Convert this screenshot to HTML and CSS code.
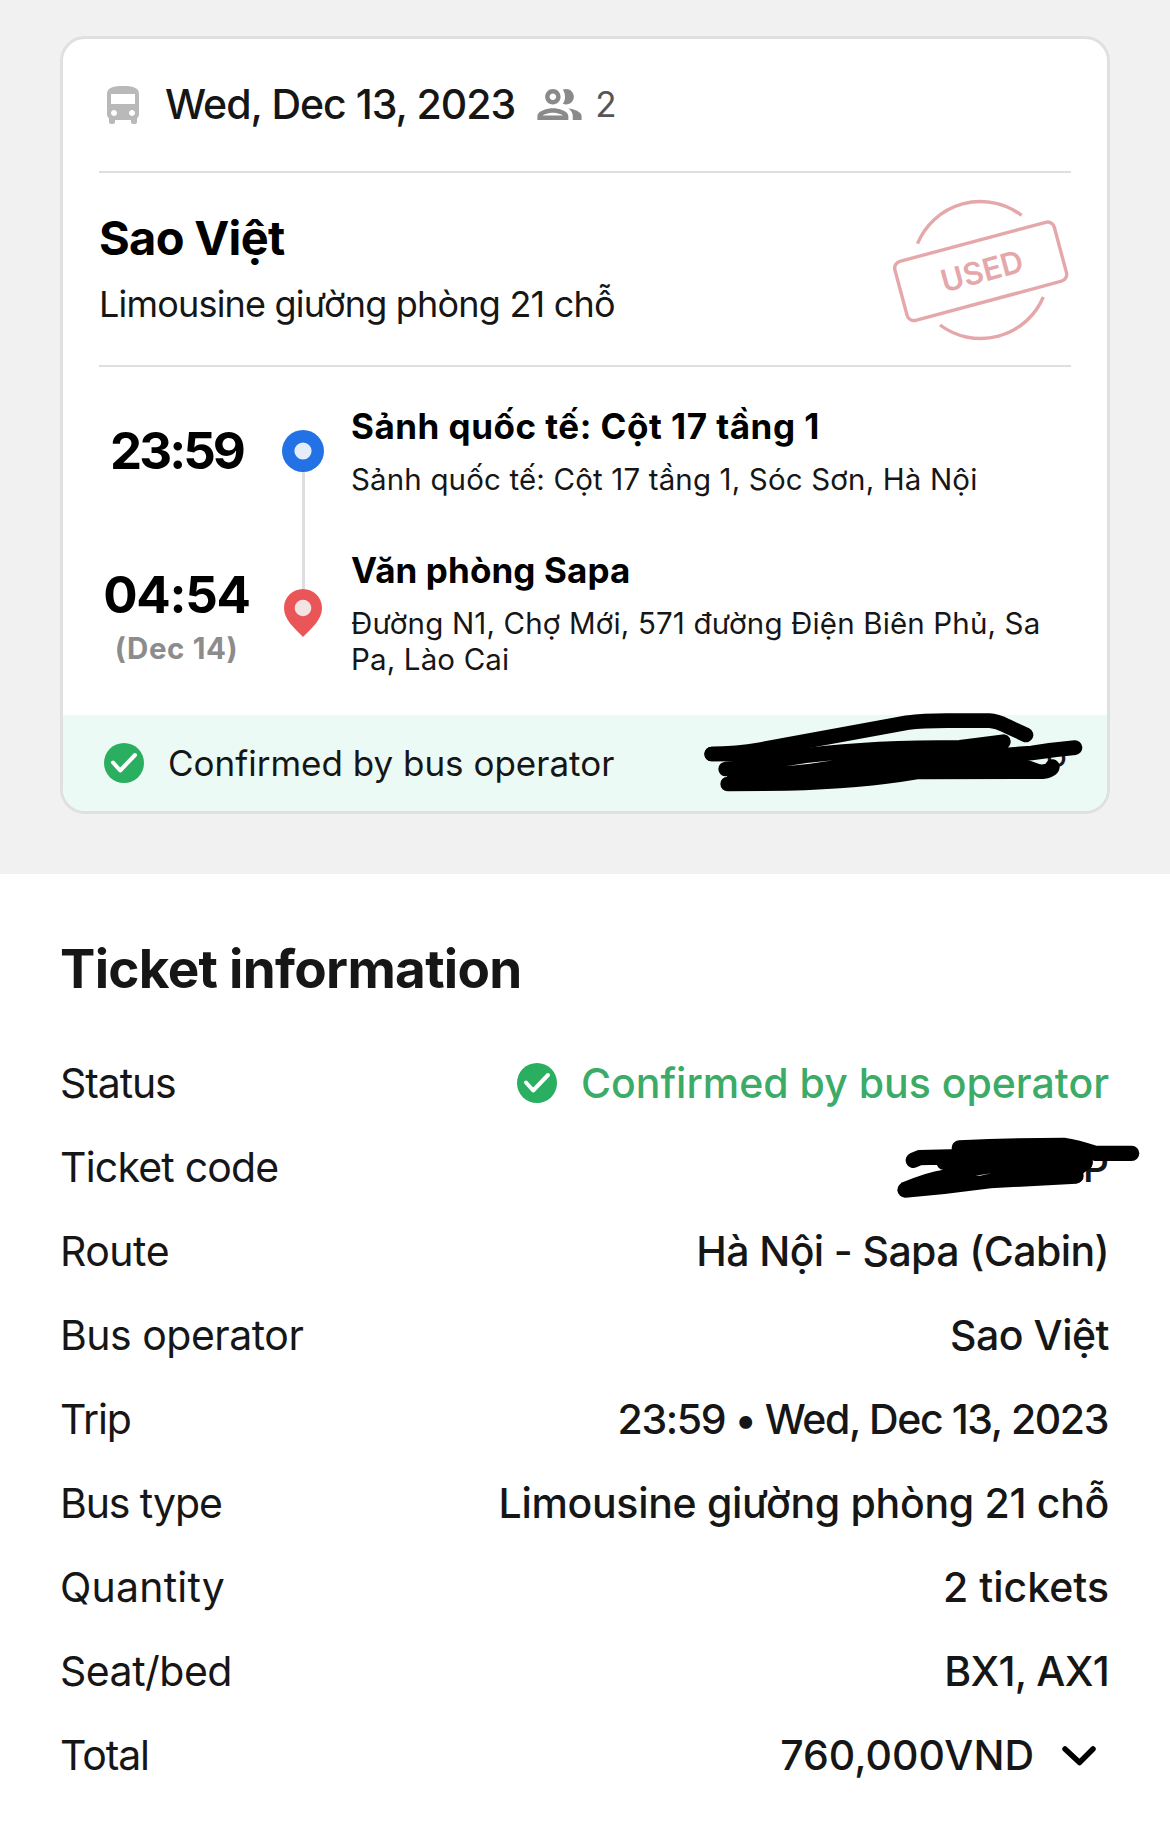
FILE: index.html
```html
<!DOCTYPE html>
<html lang="en">
<head>
<meta charset="UTF-8">
<meta name="viewport" content="width=device-width, initial-scale=1.0">
<title>Ticket information</title>
<link rel="stylesheet" href="styles.css">
</head>
<body>
<div class="top">
  <div class="card">
    <div class="card-header">
      <svg class="bus-icon" viewBox="0 0 24 24"><path d="M4 16c0 .88.39 1.67 1 2.22V20c0 .55.45 1 1 1h1c.55 0 1-.45 1-1v-1h8v1c0 .55.45 1 1 1h1c.55 0 1-.45 1-1v-1.78c.61-.55 1-1.34 1-2.22V6c0-3.5-3.58-4-8-4s-8 .5-8 4v10zm3.5 1c-.83 0-1.5-.67-1.5-1.5S6.67 14 7.5 14s1.5.67 1.5 1.5S8.33 17 7.5 17zm9 0c-.83 0-1.5-.67-1.5-1.5s.67-1.5 1.5-1.5 1.5.67 1.5 1.5-.67 1.5-1.5 1.5zM18 11H6V6h12v5z"/></svg>
      <span class="date">Wed, Dec 13, 2023</span>
      <svg class="people-icon" viewBox="0 0 24 24"><path d="M9 13.75c-2.34 0-7 1.17-7 3.5V19h14v-1.75c0-2.33-4.66-3.5-7-3.5zM4.34 17c.84-.58 2.87-1.25 4.66-1.25s3.82.67 4.66 1.25H4.34zM9 12c1.93 0 3.5-1.57 3.5-3.5S10.93 5 9 5 5.5 6.57 5.5 8.5 7.07 12 9 12zm0-5c.83 0 1.5.67 1.5 1.5S9.83 10 9 10s-1.5-.67-1.5-1.5S8.17 7 9 7zm7.04 6.81c1.16.84 1.96 1.96 1.96 3.44V19h4v-1.75c0-2.02-3.5-3.17-5.96-3.44zM15 12c1.93 0 3.5-1.57 3.5-3.5S16.93 5 15 5c-.54 0-1.04.13-1.5.35.63.89 1 1.98 1 3.15s-.37 2.26-1 3.15c.46.22.96.35 1.5.35z"/></svg>
      <span class="people">2</span>
    </div>

    <div class="operator">
      <div>
        <div class="operator-name">Sao Việt</div>
        <div class="operator-type">Limousine giường phòng 21 chỗ</div>
      </div>
      <svg class="stamp" viewBox="0 0 181 145">
        <path d="M27.5 45.7A68 68 0 0 1 131.6 17.4M50 127A68 68 0 0 0 153.3 99"/>
        <g transform="rotate(-15 90.7 73.3)">
          <rect x="8.2" y="42.8" width="165" height="61" rx="7"/>
          <text x="92" y="84.5" text-anchor="middle">USED</text>
        </g>
      </svg>
    </div>

    <div class="journey">
      <div class="stop">
        <div class="when"><div class="time time-from">23:59</div></div>
        <div class="marker">
          <svg class="dot" viewBox="0 0 42 42"><circle cx="21" cy="21" r="21" fill="#2272e6"/><circle cx="21" cy="21" r="8.6" fill="#e4edf9"/></svg>
          <div class="line"></div>
        </div>
        <div>
          <div class="stop-name stop-from">Sảnh quốc tế: Cột 17 tầng 1</div>
          <div class="address">Sảnh quốc tế: Cột 17 tầng 1, Sóc Sơn, Hà Nội</div>
        </div>
      </div>
      <div class="stop stop-last">
        <div class="when">
          <div class="time">04:54</div>
          <div class="day">(Dec 14)</div>
        </div>
        <div class="marker">
          <div class="line"></div>
          <svg class="pin" viewBox="0 0 38 48"><path d="M19 0C8.4 0 0 8.3 0 19c0 11 9 19 19 29 10-10 19-18 19-29C38 8.3 29.6 0 19 0z" fill="#ea5658"/><circle cx="19" cy="19" r="8.3" fill="#f3e4e4"/></svg>
        </div>
        <div>
          <div class="stop-name">Văn phòng Sapa</div>
          <div class="address">Đường N1, Chợ Mới, 571 đường Điện Biên Phủ, Sa Pa, Lào Cai</div>
        </div>
      </div>
    </div>

    <div class="card-footer">
      <svg class="check" viewBox="0 0 40 40"><circle cx="20" cy="20" r="20"/><path d="M9 19.5l7.2 8L31 12"/></svg>
      <span>Confirmed by bus operator</span>
      <span class="card-code">P</span>
      <svg class="redact" viewBox="0 0 1410 570">
        <path d="M155 192Q230 191 300 179Q560 132 740 98Q790 92 860 92L988 92Q1010 93 1040 108L1098 135"/>
        <path d="M155 192L450 194Q640 172 900 172L1030 155M197 237L500 225L900 205L1115 189Q1180 179 1245 173M203 282L380 280Q600 275 770 246L1150 245Q1176 240 1177 230"/>
        <path class="area" d="M200 240L240 195L500 180L1030 150L1040 190L1110 212L1160 230L770 250L400 285L203 285z"/>
        <path class="gap" d="M378 229L440 219L520 211L450 221z"/>
      </svg>
    </div>
  </div>
</div>

<div class="info">
  <h2>Ticket information</h2>
  <div class="row">
    <span class="label label-tight">Status</span>
    <span class="value confirmed">
      <svg class="check" viewBox="0 0 40 40"><circle cx="20" cy="20" r="20"/><path d="M9 19.5l7.2 8L31 12"/></svg>
      Confirmed by bus operator
    </span>
  </div>
  <div class="row">
    <span class="label label-code">Ticket code</span>
    <span class="value">P</span>
    <svg class="redact redact-code" viewBox="0 0 870 540">
      <path d="M100 151L118 143L240 140M238 114Q400 106 550 106Q590 112 645 130L755 130M192 157L616 157M75 240Q200 230 330 212L588 198"/>
      <path class="area" d="M62 219Q140 186 190 179L230 110L560 100L636 125L636 170L610 190L588 200L330 215L75 240z"/>
      <path class="gap" d="M286 197L335 190L300 197z"/>
    </svg>
  </div>
  <div class="row">
    <span class="label">Route</span>
    <span class="value route">Hà Nội - Sapa (Cabin)</span>
  </div>
  <div class="row">
    <span class="label">Bus operator</span>
    <span class="value bus-operator">Sao Việt</span>
  </div>
  <div class="row">
    <span class="label label-tight">Trip</span>
    <span class="value trip">23:59 • Wed, Dec 13, 2023</span>
  </div>
  <div class="row">
    <span class="label label-tight">Bus type</span>
    <span class="value bus-type">Limousine giường phòng 21 chỗ</span>
  </div>
  <div class="row">
    <span class="label label-quantity">Quantity</span>
    <span class="value">2 tickets</span>
  </div>
  <div class="row">
    <span class="label">Seat/bed</span>
    <span class="value seat">BX1, AX1</span>
  </div>
  <div class="row">
    <span class="label label-tight">Total</span>
    <span class="value total">
      760,000VND
      <svg class="chevron" viewBox="0 0 34 20"><path d="M3 3l14.5 13.5L31 3"/></svg>
    </span>
  </div>
</div>
</body>
</html>
```
FILE: styles.css
```css
* {
  box-sizing: border-box;
}

body {
  font-family: Inter, "Open Sans", sans-serif;
  background-color: #fff;
  color: #161616;
  margin: 0;
}

svg {
  flex: none;
}

.top {
  background-color: #f1f1f1;
  padding: 36px 60px 60px;
}

.card {
  background-color: #fff;
  border: 3px solid #dfe0df;
  border-radius: 25px;
  overflow: hidden;
}

.card-header {
  display: flex;
  align-items: center;
  height: 134px;
  margin: 0 36px;
  padding-bottom: 2px;
  border-bottom: 2px solid #dfdfdf;
}

.bus-icon {
  width: 48px;
  height: 48px;
  margin: 3px 18px 0 0;
  fill: #b9b9b9;
}

.date {
  font-size: 41px;
  font-weight: 500;
  letter-spacing: -1px;
}

.people-icon {
  width: 53px;
  height: 53px;
  margin: 1px 9px 0 18px;
  fill: #8a8a8a;
}

.people {
  font-size: 35px;
  color: #555;
}

.operator {
  display: flex;
  justify-content: space-between;
  height: 194px;
  margin: 0 36px;
  padding-top: 36px;
  border-bottom: 2px solid #dfdfdf;
}

.operator-name {
  font-size: 47px;
  font-weight: 700;
  line-height: 58px;
  letter-spacing: -0.7px;
  color: #000;
}

.operator-type {
  margin-top: 15px;
  font-size: 36px;
  line-height: 44px;
  letter-spacing: -0.8px;
}

.stamp {
  width: 181px;
  height: 145px;
  margin-top: -11px;
  fill: none;
  stroke: #e5a8aa;
  stroke-width: 3.4;
}

.stamp text {
  font-size: 31px;
  font-weight: 600;
  fill: #e5a8aa;
  stroke: none;
}

.journey {
  padding: 37px 36px 38px;
}

.stop {
  display: grid;
  grid-template-columns: 156px 42px 1fr;
  column-gap: 27px;
  min-height: 144px;
}

.stop-last {
  min-height: 0;
}

.when {
  padding: 17px 1px 0 0;
  text-align: center;
}

.time {
  font-size: 51px;
  font-weight: 700;
  line-height: 60px;
  letter-spacing: -1.3px;
  color: #000;
}

.time-from {
  letter-spacing: -3px;
}

.day {
  margin: 5px 0 -5px;
  font-size: 29.5px;
  font-weight: 700;
  line-height: 36px;
  letter-spacing: 0.6px;
  color: #8c8c8c;
}

.marker {
  display: flex;
  flex-direction: column;
  align-items: center;
  padding-top: 26px;
}

.line {
  flex: 1;
  width: 3px;
  background-color: #dedede;
}

.stop-last .marker {
  padding-top: 0;
}

.stop-last .line {
  flex: none;
  height: 41px;
}

.dot {
  width: 42px;
  height: 42px;
}

.pin {
  width: 38px;
  height: 48px;
}

.stop-name {
  font-size: 35px;
  font-weight: 700;
  line-height: 44px;
  letter-spacing: 0.1px;
  color: #000;
}

.stop-from {
  letter-spacing: 0.5px;
}

.address {
  margin-top: 13px;
  font-size: 29.5px;
  line-height: 36px;
  letter-spacing: 0.15px;
}

.card-footer {
  position: relative;
  display: flex;
  align-items: center;
  height: 96px;
  padding: 0 40px;
  background-color: #ecfaf5;
  font-size: 35px;
}

.check {
  width: 40px;
  height: 40px;
  margin-right: 24px;
  fill: #2aae60;
}

.check path {
  fill: none;
  stroke: #fff;
  stroke-width: 4;
  stroke-linecap: round;
  stroke-linejoin: round;
}

.card-footer .check {
  margin-left: 1px;
}

.card-code {
  margin-left: auto;
}

/* marker strokes over the ticket code */
.redact {
  position: absolute;
  left: 597px;
  top: -25px;
  width: 470px;
  height: 190px;
  stroke: #000;
  stroke-width: 44;
  stroke-linecap: round;
  stroke-linejoin: round;
  fill: none;
}

.redact .area {
  fill: #000;
  stroke: none;
}

.redact .gap {
  fill: #fff;
  stroke: none;
}

.redact-code {
  left: 820px;
  top: -15px;
  width: 290px;
  height: 180px;
  stroke-width: 46;
}

.info {
  padding: 63px 60px 40px;
}

.info h2 {
  margin: 0 0 40px;
  font-size: 53px;
  font-weight: 700;
  line-height: 64px;
  letter-spacing: -0.7px;
}

.row {
  position: relative;
  display: flex;
  justify-content: space-between;
  align-items: center;
  height: 84px;
  font-size: 41px;
}

.label {
  letter-spacing: -0.5px;
}

.label-tight {
  letter-spacing: -1.1px;
}

.label-code {
  letter-spacing: -0.8px;
}

.label-quantity {
  letter-spacing: 0.2px;
}

.value {
  display: flex;
  align-items: center;
  padding-right: 1px;
  font-weight: 500;
}

.confirmed {
  color: #3bab67;
}

.route {
  letter-spacing: -0.6px;
}

.bus-operator {
  letter-spacing: -0.5px;
}

.trip {
  padding-right: 2px;
  letter-spacing: -1.4px;
}

.bus-type {
  letter-spacing: -0.3px;
}

.seat {
  letter-spacing: -0.7px;
}

.chevron {
  width: 34px;
  height: 20px;
  margin: 2px 13px 0 28px;
  fill: none;
  stroke: #000;
  stroke-width: 5.5;
  stroke-linecap: round;
  stroke-linejoin: round;
}
```
